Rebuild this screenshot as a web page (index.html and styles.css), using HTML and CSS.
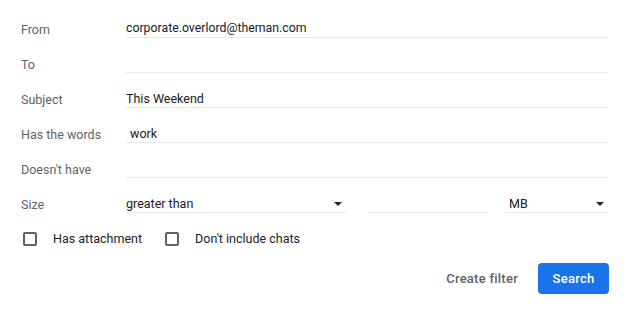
FILE: index.html
```html
<!DOCTYPE html>
<html>
<head>
<meta charset="utf-8">
<link rel="stylesheet" href="styles.css">
</head>
<body>
<form class="filter">
  <div class="row">
    <label class="label">From</label>
    <div class="field field-email">corporate.overlord@theman.com</div>
  </div>
  <div class="row">
    <label class="label">To</label>
    <div class="field"></div>
  </div>
  <div class="row">
    <label class="label">Subject</label>
    <div class="field">This Weekend</div>
  </div>
  <div class="row">
    <label class="label">Has the words</label>
    <div class="field field-indent">work</div>
  </div>
  <div class="row">
    <label class="label">Doesn't have</label>
    <div class="field"></div>
  </div>
  <div class="row">
    <label class="label">Size</label>
    <div class="size-group">
      <div class="field select select-op"><span>greater than</span><span class="caret"></span></div>
      <div class="field number"></div>
      <div class="field select select-unit"><span>MB</span><span class="caret"></span></div>
    </div>
  </div>
  <div class="row checks">
    <div class="check"><span class="box"></span><span>Has attachment</span></div>
    <div class="check"><span class="box"></span><span>Don't include chats</span></div>
  </div>
  <div class="actions">
    <button type="button" class="btn-text">Create filter</button>
    <button type="button" class="btn-primary">Search</button>
  </div>
</form>
</body>
</html>
```

FILE: styles.css
```css
html, body {
  margin: 0;
  padding: 0;
  background: #ffffff;
}
body {
  font-family: Roboto, "Liberation Sans", Arial, sans-serif;
  font-size: 12.5px;
  color: #202124;
}
.filter {
  width: 630px;
  box-sizing: border-box;
  padding: 12px 22px 0 21px;
}
.row {
  display: flex;
  align-items: center;
  height: 35px;
}
.label {
  width: 105px;
  flex: none;
  color: #5f6368;
}
.field {
  flex: 1;
  height: 17px;
  line-height: 17px;
  border-bottom: 1px solid #e8eaed;
  color: #202124;
  white-space: nowrap;
  margin-top: -1px;
}
.field-email {
  font-size: 12.3px;
}
.field-indent {
  padding-left: 4px;
}
.size-group {
  flex: 1;
  display: flex;
  align-items: center;
}
.select {
  display: flex;
  justify-content: space-between;
  align-items: center;
}
.select-op {
  flex: none;
  width: 220px;
}
.number {
  flex: none;
  width: 120px;
  margin-left: 22px;
}
.select-unit {
  flex: none;
  width: 103px;
  margin-left: 17px;
  box-sizing: border-box;
  padding-left: 4px;
}
.caret {
  width: 0;
  height: 0;
  border-left: 4px solid transparent;
  border-right: 4px solid transparent;
  border-top: 4px solid #202124;
  margin-right: 4px;
}
.checks {
  margin-top: -1px;
}
.check {
  display: flex;
  align-items: center;
  color: #202124;
}
.check + .check {
  margin-left: 21px;
}
.box {
  width: 10px;
  height: 10px;
  border: 2px solid #5f6368;
  border-radius: 2px;
  margin: 0 16px 0 2px;
}
.actions {
  display: flex;
  justify-content: flex-end;
  align-items: center;
  margin-top: 7px;
  margin-right: -1px;
  gap: 20px;
}
.btn-text {
  border: none;
  background: none;
  font-family: Roboto, "Liberation Sans", Arial, sans-serif;
  font-size: 13px;
  font-weight: 500;
  color: #5f6368;
  padding: 0;
  letter-spacing: 0.25px;
}
.btn-primary {
  width: 71px;
  height: 31px;
  border: none;
  border-radius: 4px;
  background: #1a73e8;
  color: #ffffff;
  font-family: Roboto, "Liberation Sans", Arial, sans-serif;
  font-size: 13px;
  font-weight: 500;
  letter-spacing: 0.25px;
  padding: 0;
}
```
